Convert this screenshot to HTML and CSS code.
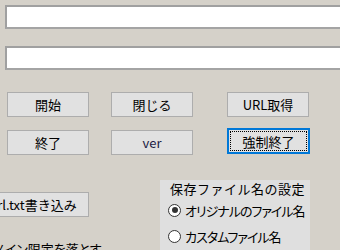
FILE: index.html
```html
<!DOCTYPE html>
<html lang="ja">
<head>
    <meta charset="UTF-8">
    <title>Downloader</title>
    <link rel="stylesheet" href="styles.css">
</head>
<body>
    <div class="form">
        <div class="textbox"></div>
        <div class="textbox second"></div>

        <div class="button-grid">
            <button class="btn">開始</button>
            <button class="btn">閉じる</button>
            <button class="btn">URL取得</button>
            <button class="btn">終了</button>
            <button class="btn ver">ver</button>
            <button class="btn focused">強制終了</button>
        </div>

        <div class="bottom">
            <div class="left-col">
                <button class="btn write-btn">url.txt書き込み</button>
                <div class="note">ドメイン限定を落とす</div>
            </div>

            <div class="group">
                <div class="legend">保存ファイル名の設定</div>
                <label class="radio-row">
                    <span class="radio checked"></span>
                    <span class="radio-text">オリジナルのファイル名</span>
                </label>
                <label class="radio-row">
                    <span class="radio"></span>
                    <span class="radio-text">カスタムファイル名</span>
                </label>
            </div>
        </div>
    </div>
</body>
</html>
```

FILE: styles.css
```css
* {
    margin: 0;
    padding: 0;
    box-sizing: border-box;
}

body {
    font-family: "Noto Sans CJK JP", "Noto Sans", sans-serif;
    font-size: 13px;
    color: #000;
    background: #d5d1c9;
    overflow: hidden;
}

.form {
    width: 340px;
    height: 250px;
    overflow: hidden;
}

.textbox {
    width: 360px;
    height: 24px;
    margin: 5px 0 0 5px;
    background: #fff;
    border-top: 2px solid #a0a0a0;
    border-left: 2px solid #a0a0a0;
    border-bottom: 2px solid #a4a4a4;
}

.textbox.second {
    margin-top: 17px;
}

.button-grid {
    display: grid;
    grid-template-columns: 104px 116px 83px;
    row-gap: 13px;
    margin: 22px 0 0 7px;
}

.btn {
    position: relative;
    width: 82px;
    height: 25px;
    font-family: inherit;
    font-size: 13px;
    line-height: 1;
    color: #000;
    background: #e1e1e1;
    border: 1px solid #adadad;
}

.ver {
    color: #1c1c44;
}

.focused {
    width: 83px;
    height: 26px;
    margin-top: -2px;
    border: 2px solid #0078d7;
}

.focused::after {
    content: "";
    position: absolute;
    inset: 1px;
    border: 1px dotted #000;
}

.bottom {
    display: flex;
    align-items: flex-start;
}

.left-col {
    width: 160px;
    margin-top: 37px;
}

.write-btn {
    width: 112px;
    margin-left: -23px;
}

.note {
    margin: 24px 0 0 -17px;
    line-height: 16px;
    white-space: nowrap;
    font-feature-settings: "palt";
}

.group {
    width: 150px;
    height: 90px;
    margin-top: 25px;
    padding: 1px 0 0 10px;
    background: #dfdfdf;
}

.legend {
    line-height: 16px;
    letter-spacing: 0.5px;
    white-space: nowrap;
}

.radio-row {
    display: flex;
    align-items: center;
    height: 26px;
    margin-left: -2px;
    white-space: nowrap;
}

.radio {
    position: relative;
    width: 13px;
    height: 13px;
    border: 1px solid #333;
    border-radius: 50%;
    background: #fff;
    flex-shrink: 0;
}

.radio.checked::after {
    content: "";
    position: absolute;
    left: 2.5px;
    top: 2.5px;
    width: 6px;
    height: 6px;
    border-radius: 50%;
    background: #333;
}

.radio-text {
    margin-left: 4px;
    letter-spacing: -1px;
    font-feature-settings: "palt";
}
```
